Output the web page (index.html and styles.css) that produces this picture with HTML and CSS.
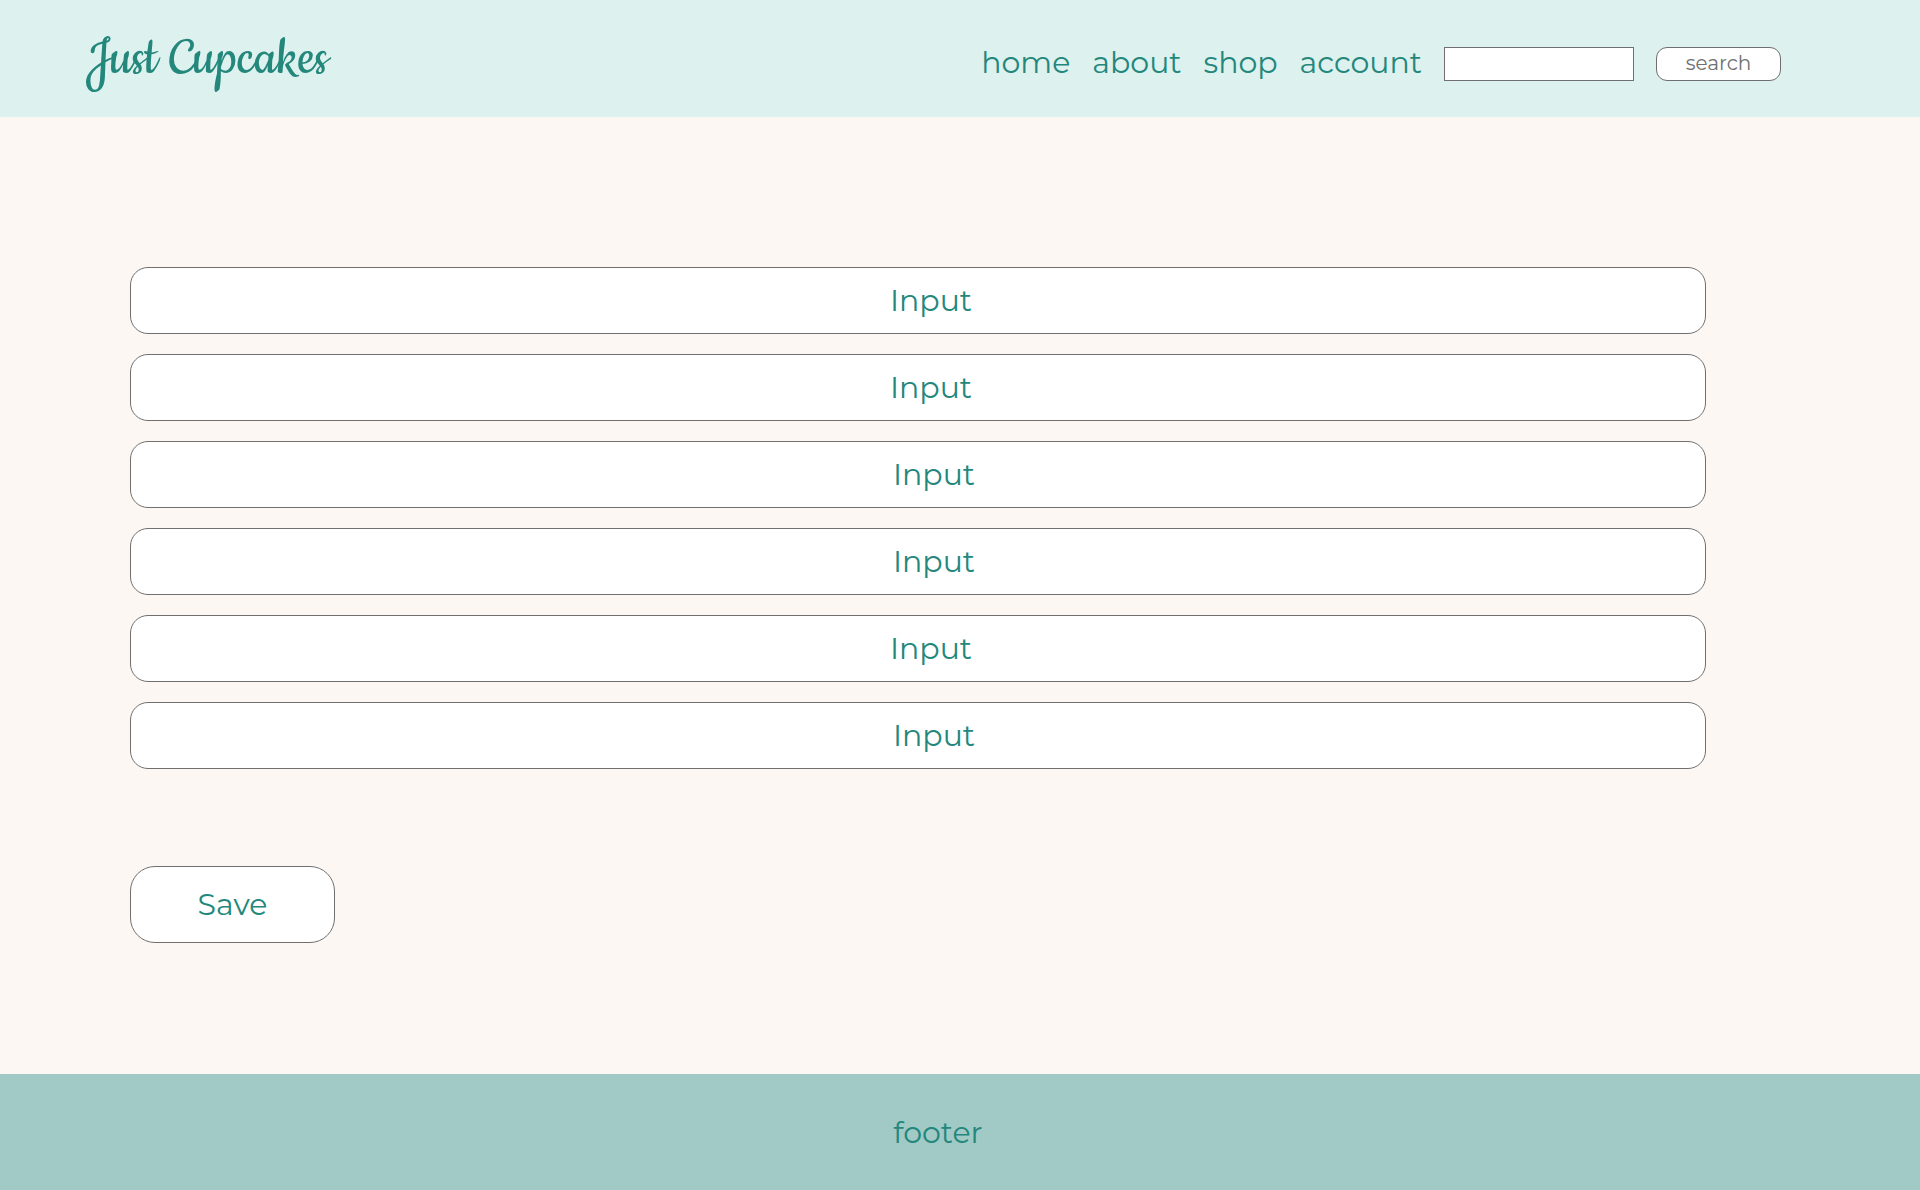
FILE: index.html
```html
<!DOCTYPE html>
<html lang="en">
<head>
  <meta charset="utf-8">
  <meta name="viewport" content="width=device-width, initial-scale=1">
  <title>Just Cupcakes</title>
  <link rel="stylesheet" href="styles.css">
</head>
<body>
  <header class="site-header">
    <a class="logo" href="#">Just Cupcakes</a>
    <nav class="site-nav">
      <a href="#">home</a>
      <a href="#">about</a>
      <a href="#">shop</a>
      <a href="#">account</a>
    </nav>
    <form class="search" role="search">
      <input class="search-box" type="search" aria-label="Search">
      <button class="search-button" type="button">search</button>
    </form>
  </header>
  <main class="content">
    <form class="account-form">
      <div class="fields">
        <input class="field" type="text" aria-label="Input 1" placeholder="Input">
        <input class="field" type="text" aria-label="Input 2" placeholder="Input">
        <input class="field field-indent" type="text" aria-label="Input 3" placeholder="Input">
        <input class="field field-indent" type="text" aria-label="Input 4" placeholder="Input">
        <input class="field" type="text" aria-label="Input 5" placeholder="Input">
        <input class="field field-indent" type="text" aria-label="Input 6" placeholder="Input">
      </div>
      <button class="save" type="button">Save</button>
    </form>
  </main>
  <footer class="site-footer">footer</footer>
</body>
</html>
```

FILE: styles.css
```css
:root {
  --teal: #23877c;
  --line: #707070;
}

* {
  box-sizing: border-box;
}

body {
  display: flex;
  flex-direction: column;
  min-height: 100vh;
  margin: 0;
  background: #fcf7f3;
  color: var(--teal);
  font: 400 30px/36px Montserrat, Inter, sans-serif;
}

input,
button {
  margin: 0;
  border: 1px solid var(--line);
  background: #fff;
  color: inherit;
  font: inherit;
}

a {
  color: inherit;
  text-decoration: none;
}

.site-header {
  display: flex;
  align-items: center;
  gap: 22px;
  min-height: 117px;
  padding: 11px 139px 0 86px;
  background: #ddf1ee;
}

.logo {
  margin-right: auto;
  padding-bottom: 10px;
  font: 400 60px/72px Cookie, "Liberation Serif", serif;
}

.site-nav,
.search {
  display: flex;
  align-items: center;
  gap: 22px;
}

.site-nav {
  padding-bottom: 2px;
}

.search-box {
  width: 190px;
  height: 34px;
  padding: 0 8px;
  appearance: none;
  font-size: 20px;
}

.search-button {
  width: 125px;
  height: 34px;
  padding: 0 0 2px;
  border-radius: 11px;
  color: var(--line);
  font-size: 20px;
  line-height: 24px;
}

.content {
  flex: 1;
  padding: 150px 214px 131px 130px;
}

.fields {
  display: grid;
  gap: 20px;
  margin-bottom: 97px;
}

.field {
  width: 100%;
  height: 67px;
  padding: 0 0 0 26px;
  border-radius: 18px;
  text-align: center;
}

.field-indent {
  padding-left: 32px;
}

.field::placeholder {
  color: var(--teal);
  opacity: 1;
}

.save {
  display: block;
  width: 205px;
  height: 77px;
  border-radius: 25px;
}

.site-footer {
  padding: 41px 44px 39px 0;
  background: #a1cac6;
  text-align: center;
}
```
